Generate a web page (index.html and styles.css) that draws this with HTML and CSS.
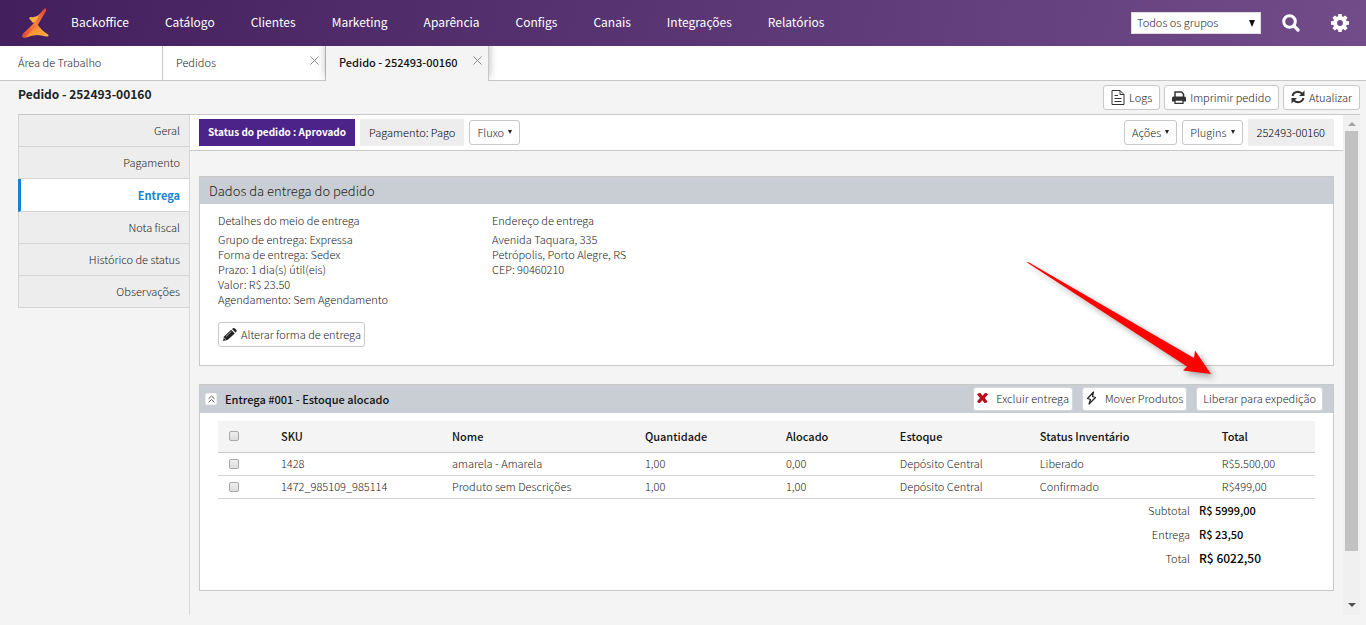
FILE: index.html
```html
<!DOCTYPE html>
<html lang="pt-BR">
<head>
<meta charset="utf-8">
<title>Pedido - 252493-00160</title>
<link rel="stylesheet" href="styles.css">
</head>
<body>
<header class="topbar">
  <a class="logo" href="#" aria-label="Início">
    <svg width="28" height="30" viewBox="0 0 28 30" aria-hidden="true">
      <defs>
        <linearGradient id="lg1" x1="1" y1="0" x2="0" y2="1"><stop offset="0" stop-color="#e2403a"/><stop offset=".5" stop-color="#f5803a"/><stop offset="1" stop-color="#e8403a"/></linearGradient>
        <linearGradient id="lg2" x1="0" y1="0" x2="1" y2="1"><stop offset="0" stop-color="#e9473a"/><stop offset=".55" stop-color="#fb9a36"/><stop offset="1" stop-color="#fbb040"/></linearGradient>
      </defs>
      <path fill="url(#lg2)" d="M13 15L16 17Q19 22 26 26.500Q28 29 24 28.500Q14 25 4 29.500Q-1 30 1 26Z"/>
      <path fill="url(#lg1)" d="M22 1Q25-1 24 3L17 15Q15 19 11 21L4 29Q-1 31 1 26L12 15L15 9Z"/>
      <path fill="#fbb040" d="M8 11.500Q6 9 9 9Q14 10 18 6L13 14L11 15Z"/>
    </svg>
  </a>
  <nav class="nav">
    <a href="#">Backoffice</a><a href="#">Catálogo</a><a href="#">Clientes</a><a href="#">Marketing</a><a href="#">Aparência</a><a href="#">Configs</a><a href="#">Canais</a><a href="#">Integrações</a><a href="#">Relatórios</a>
  </nav>
  <div class="group-select">
    <select aria-label="Grupo"><option>Todos os grupos</option></select>
    <svg width="8" height="7" viewBox="0 0 8 7" aria-hidden="true"><path d="M1 0H7L4 7Z" fill="#111"/></svg>
  </div>
  <button class="icon-btn search" type="button" aria-label="Buscar">
    <svg width="18" height="18" viewBox="0 0 18 18"><circle cx="7.500" cy="7.500" r="5.800" fill="none" stroke="#fff" stroke-width="3"/><path d="M12 12L16 16" stroke="#fff" stroke-width="3.200" stroke-linecap="round"/></svg>
  </button>
  <button class="icon-btn" type="button" aria-label="Configurações">
    <svg width="18" height="18" viewBox="-9 -9 18 18"><circle r="4.900" fill="none" stroke="#fff" stroke-width="4"/><g fill="#fff"><path id="t" d="M-2-6L-1.700-9H1.700L2-6V-5H-2Z"/><use href="#t" transform="rotate(45)"/><use href="#t" transform="rotate(90)"/><use href="#t" transform="rotate(135)"/><use href="#t" transform="rotate(180)"/><use href="#t" transform="rotate(225)"/><use href="#t" transform="rotate(270)"/><use href="#t" transform="rotate(315)"/></g></svg>
  </button>
</header>

<div class="tabs">
  <div class="tab"><a href="#">Área de Trabalho</a></div>
  <div class="tab"><a href="#">Pedidos</a><button type="button" aria-label="Fechar"><svg width="9" height="9" viewBox="0 0 9 9"><path d="M.5.5L8.500 8.500M8.500.5L.5 8.500"/></svg></button></div>
  <div class="tab active"><a href="#">Pedido - 252493-00160</a><button type="button" aria-label="Fechar"><svg width="9" height="9" viewBox="0 0 9 9"><path d="M.5.5L8.500 8.500M8.500.5L.5 8.500"/></svg></button></div>
</div>

<div class="page">
  <div class="page-head">
    <h1>Pedido - 252493-00160</h1>
    <button class="btn" type="button"><svg width="14" height="15" viewBox="0 0 14 15" fill="none" stroke="#333"><path d="M1 .5H9L13 4.500V14.500H1ZM9 .5V4.500H13M3.500 5.500H7M3.500 8.500H10.500M3.500 11.500H10.500"/></svg>Logs</button>
    <button class="btn" type="button"><svg width="14" height="13" viewBox="0 0 14 13"><path d="M3 6V1H9.500L11.500 3V6" fill="none" stroke="#333" stroke-width="1.500"/><path fill="#333" d="M1.500 5.500H12.500Q14 5.500 14 7V10.500H0V7Q0 5.500 1.500 5.500Z"/><path fill="#fff" stroke="#333" stroke-width="1.300" d="M3 9H11V12.300H3Z"/></svg>Imprimir pedido</button>
    <button class="btn" type="button"><svg width="14" height="14" viewBox="0 0 14 14"><path d="M1.500 6Q2.500 2 7 1.800Q9.500 1.800 11.500 4M12.500 8Q11.500 12 7 12.200Q4.500 12.200 2.500 10" fill="none" stroke="#333" stroke-width="2"/><path fill="#333" d="M13.500.5V6H8ZM.5 13.500V8H6Z"/></svg>Atualizar</button>
  </div>

  <div class="workspace">
    <nav class="side">
      <a href="#">Geral</a>
      <a href="#">Pagamento</a>
      <a href="#" class="active">Entrega</a>
      <a href="#">Nota fiscal</a>
      <a href="#">Histórico de status</a>
      <a href="#">Observações</a>
    </nav>

    <main class="main">
      <div class="toolbar">
        <span class="tag status">Status do pedido : Aprovado</span>
        <span class="tag">Pagamento: Pago</span>
        <button class="btn menu" type="button">Fluxo<i class="caret"></i></button>
        <button class="btn menu first-right" type="button">Ações<i class="caret"></i></button>
        <button class="btn menu" type="button">Plugins<i class="caret"></i></button>
        <span class="tag">252493-00160</span>
      </div>

      <section class="panel">
        <h2 class="panel-title">Dados da entrega do pedido</h2>
        <div class="details">
          <div class="detail">
            <h3>Detalhes do meio de entrega</h3>
            <p>Grupo de entrega: Expressa<br>Forma de entrega: Sedex<br>Prazo: 1 dia(s) útil(eis)<br>Valor: R$ 23.50<br>Agendamento: Sem Agendamento</p>
            <button class="btn edit" type="button"><svg width="14" height="13" viewBox="0 0 14 13"><path fill="#222" d="M0 13L1 8.500L8.200 1.800L11.800 5.400L4.500 12Z"/><path fill="#222" d="M9 1L10 .2Q11-.3 12 .6L13.200 1.800Q14 2.800 13.300 3.800L12.500 4.600Z"/><path d="M1 9.800L3.300 12M3 8.500L8.500 3.300" stroke="#ddd" stroke-width=".7"/></svg>Alterar forma de entrega</button>
          </div>
          <div class="detail">
            <h3>Endereço de entrega</h3>
            <p>Avenida Taquara, 335<br>Petrópolis, Porto Alegre, RS<br>CEP: 90460210</p>
          </div>
        </div>
        <svg class="pointer" width="200" height="130" viewBox="0 0 200 130" aria-hidden="true"><path fill="#f00" d="M7 7.500Q7 6.500 9 7.500L174 103L175 95.500L191 119L163 115.500L167 111.500Z"/></svg>
      </section>

      <section class="panel delivery">
        <div class="panel-bar">
          <button class="collapse" type="button" aria-label="Recolher"><svg width="7" height="8" viewBox="0 0 7 8" fill="none" stroke="#555"><path d="M.5 3.800L3.500 1L6.500 3.800M.5 7.300L3.500 4.500L6.500 7.300"/></svg></button>
          <h2>Entrega #001 - Estoque alocado</h2>
          <button class="btn bar-btn" type="button"><svg width="11" height="10" viewBox="0 0 11 10"><path fill="#b8101c" d="M0 1.500L2 0H3.500L5.500 2.800L8 0H9.500L11 1.500L7.800 5L10.500 8.500L9 10H7.500L5.300 7.200L3 10H1.500L0 8.500L3 5Z"/></svg>Excluir entrega</button>
          <button class="btn bar-btn" type="button"><svg width="11" height="14" viewBox="0 0 11 14"><path fill="none" stroke="#222" stroke-width="1.200" stroke-linejoin="round" d="M7.500 1L1.500 7.500L4.500 8.500L3 13L9.500 6.500L6.500 5.500Z"/></svg>Mover Produtos</button>
          <button class="btn bar-btn" type="button">Liberar para expedição</button>
        </div>
        <div class="delivery-body">
          <table class="items">
            <colgroup><col class="c-check"><col class="c-sku"><col class="c-name"><col class="c-qty"><col class="c-alloc"><col class="c-stock"><col class="c-status"><col class="c-total"></colgroup>
            <thead><tr><th><input type="checkbox" aria-label="Selecionar todos"></th><th>SKU</th><th>Nome</th><th>Quantidade</th><th>Alocado</th><th>Estoque</th><th>Status Inventário</th><th>Total</th></tr></thead>
            <tbody>
              <tr><td><input type="checkbox" aria-label="Selecionar 1428"></td><td>1428</td><td>amarela - Amarela</td><td>1,00</td><td>0,00</td><td>Depósito Central</td><td>Liberado</td><td>R$5.500,00</td></tr>
              <tr><td><input type="checkbox" aria-label="Selecionar 1472_985109_985114"></td><td>1472_985109_985114</td><td>Produto sem Descrições</td><td>1,00</td><td>1,00</td><td>Depósito Central</td><td>Confirmado</td><td>R$499,00</td></tr>
            </tbody>
          </table>
          <dl class="totals">
            <dt>Subtotal</dt><dd>R$ 5999,00</dd>
            <dt>Entrega</dt><dd>R$ 23,50</dd>
            <dt>Total</dt><dd class="grand">R$ 6022,50</dd>
          </dl>
        </div>
      </section>
    </main>

    <div class="scroll" aria-hidden="true">
      <svg width="8" height="4" viewBox="0 0 8 4"><path d="M0 4L4 0L8 4Z" fill="#a3a3a3"/></svg>
      <div class="track"><div class="thumb"></div></div>
      <svg width="8" height="4" viewBox="0 0 8 4"><path d="M0 0H8L4 4Z" fill="#505050"/></svg>
    </div>
  </div>
</div>
</body>
</html>
```
FILE: styles.css
```css
* { box-sizing: border-box; }
body {
  margin: 0;
  min-height: 100vh;
  display: flex;
  flex-direction: column;
  background: #f4f4f4;
  color: #222;
  font: 300 11px/16px "Noto Sans CJK SC", "Noto Sans", sans-serif;
}
a { color: inherit; text-decoration: none; }
h1, h2, h3, p, dl, dd { margin: 0; }
button, select, input { font: inherit; color: inherit; }
button { cursor: pointer; }
svg { flex: none; }

.topbar {
  display: flex;
  align-items: center;
  height: 46px;
  padding: 0 17px 0 22px;
  background: linear-gradient(100deg, #431f5d, #5c3877 55%, #714c88);
}
.logo { display: flex; width: 49px; }
.nav { display: flex; gap: 36px; flex: 1; padding-bottom: 2px; color: #fff; font-size: 12px; font-weight: 400; }
.group-select { position: relative; }
.group-select select {
  display: block;
  appearance: none;
  width: 130px;
  height: 22px;
  padding: 0 5px 2px;
  border: 1px solid #ddd;
  border-radius: 0;
  background: #fff;
}
.group-select svg { position: absolute; right: 5px; top: 8px; pointer-events: none; }
.icon-btn { display: flex; padding: 0; border: 0; background: none; }
.search { margin: 0 31px 0 21px; }

.tabs { display: flex; height: 35px; background: #fff; border-bottom: 1px solid #c8c8c8; }
.tab {
  display: flex;
  justify-content: space-between;
  width: 163px;
  height: 34px;
  padding: 8px 6px 0 13px;
  border-right: 1px solid #c8c8c8;
}
.tab:first-child { padding-left: 18px; }
.tab button { display: flex; align-self: flex-start; padding: 2px 0; border: 0; background: none; }
.tab svg { stroke: #888; fill: none; }
.tab.active {
  height: 35px;
  background: #f4f4f4;
  color: #111;
  font-weight: 500;
  box-shadow: 0 -4px 8px rgba(0, 0, 0, .3);
  clip-path: inset(0 -8px 0 -8px);
}

.page { flex: 1; display: flex; flex-direction: column; padding: 0 6px 10px 18px; }
.page-head { display: flex; align-items: center; gap: 4px; height: 33px; }
.page-head h1 { flex: 1; padding-bottom: 8px; font-size: 12px; font-weight: 700; line-height: 16px; color: #222; }
.btn {
  display: inline-flex;
  align-items: center;
  gap: 4px;
  height: 25px;
  padding: 0 7px 1px;
  border: 1px solid #c8c8c8;
  border-radius: 3px;
  background: #fff;
  white-space: nowrap;
}

.workspace { flex: 1; display: flex; border-top: 1px solid #c8c8c8; }
.side { width: 172px; border-right: 1px solid #d8d8d8; }
.side a {
  display: block;
  padding: 7px 9px 8px;
  border-left: 1px solid #d4d4d4;
  border-bottom: 1px solid #d4d4d4;
  background: #ededed;
  text-align: right;
}
.side .active { padding: 8px 9px; border-left: 3px solid #1b7fd4; background: #fff; color: #1b7fd4; font-weight: 700; }

.main { flex: 1; min-width: 0; }
.toolbar {
  display: flex;
  align-items: center;
  gap: 5px;
  height: 36px;
  padding: 0 9px;
  background: #fff;
  border-bottom: 1px solid #c8c8c8;
}
.tag { padding: 5px 9px 6px; background: #ededed; color: #000; white-space: nowrap; }
.tag.status { background: #4b2389; color: #fff; font-size: 10px; font-weight: 700; }
.first-right { margin-left: auto; }
.caret { border: 2px solid transparent; border-top: 4px solid #222; border-bottom: 0; }

.panel { position: relative; margin: 25px 9px 0; border: 1px solid #c8c8c8; background: #fff; }
.panel-title { padding: 5px 9px 4px; background: #c8ced4; font-size: 13px; font-weight: 300; line-height: 18px; }
.details { display: flex; padding: 8px 18px 18px; }
.detail { width: 274px; }
.detail h3 { margin-bottom: 4px; font-size: 11px; font-weight: 300; }
.detail p { line-height: 15px; }
.edit { margin-top: 15px; padding: 0 3px 1px 4px; }
.pointer { position: absolute; z-index: 1; right: 113px; top: 78px; overflow: visible; filter: drop-shadow(3px 3px 3px rgba(0, 0, 0, .35)); }

.delivery { margin-top: 18px; }
.panel-bar { display: flex; align-items: center; height: 28px; padding: 0 10px 0 5px; background: #c8ced4; }
.panel-bar h2 { flex: 1; margin-left: 8px; font-size: 11px; font-weight: 500; color: #111; }
.collapse { display: flex; align-items: center; justify-content: center; width: 12px; height: 12px; padding: 0; border: 1px solid #eee; border-radius: 2px; background: #fff; }
.bar-btn { gap: 8px; height: 24px; margin-left: 9px; padding: 0 3px 2px; border-color: #d4d8dc; }
.bar-btn:last-child { padding: 0 6px 2px; }
.delivery-body { padding: 8px 18px 21px; }
.items { width: 100%; table-layout: fixed; border-collapse: collapse; }
.items th, .items td { padding: 2px 0 4px; border-bottom: 1px solid #d4d4d4; text-align: left; white-space: nowrap; }
.items td:first-child { padding: 3px 0; }
.items th { padding: 7px 0 8px; background: #f4f4f4; border-bottom-color: #c8c8c8; color: #111; font-weight: 500; }
.items input {
  display: block;
  appearance: none;
  width: 10px;
  height: 10px;
  margin: 0 11px;
  border: 1px solid #a8a8a8;
  border-radius: 2px;
  background: linear-gradient(#eee, #ddd);
}
.c-check { width: 5.74%; }
.c-sku { width: 15.59%; }
.c-name { width: 17.59%; }
.c-qty { width: 12.85%; }
.c-alloc { width: 10.39%; }
.c-stock { width: 12.76%; }
.c-status { width: 16.59%; }
.c-total { width: 8.49%; }
.totals { display: grid; grid-template-columns: 1fr 116px; gap: 8px 9px; padding: 3px 0; text-align: right; }
.totals dd { text-align: left; font-weight: 500; color: #000; }
.totals .grand { font-size: 12px; }

.scroll { display: flex; flex-direction: column; align-items: center; width: 17px; padding: 7px 0 8px; background: #f0f0f0; }
.track { flex: 1; width: 13px; padding: 5px 0; }
.thumb { height: 90%; background: #c1c1c1; }
```
